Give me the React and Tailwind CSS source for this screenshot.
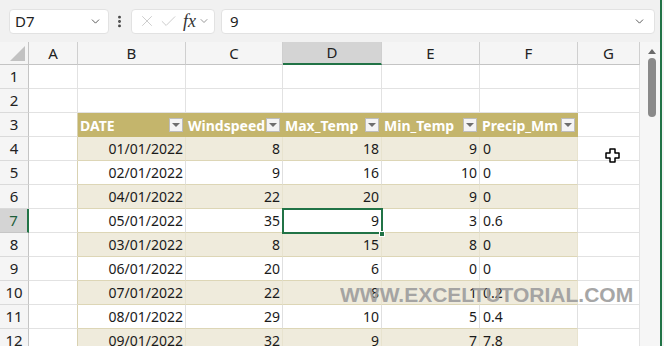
import React from 'react';
import { ChevronDown, X, Check, EllipsisVertical } from 'lucide-react';

const COLS = [
  { key: 'A', w: 'w-[49px]' },
  { key: 'B', w: 'w-[108px]' },
  { key: 'C', w: 'w-[97px]' },
  { key: 'D', w: 'w-[99px]' },
  { key: 'E', w: 'w-[98px]' },
  { key: 'F', w: 'w-[98px]' },
  { key: 'G', w: 'w-[62px]' },
];

const headers = ['DATE', 'Windspeed', 'Max_Temp', 'Min_Temp', 'Precip_Mm'];

const data = [
  ['01/01/2022', 8, 18, 9, '0'],
  ['02/01/2022', 9, 16, 10, '0'],
  ['04/01/2022', 22, 20, 9, '0'],
  ['05/01/2022', 35, 9, 3, '0.6'],
  ['03/01/2022', 8, 15, 8, '0'],
  ['06/01/2022', 20, 6, 0, '0'],
  ['07/01/2022', 22, 8, 1, '0.2'],
  ['08/01/2022', 29, 10, 5, '0.4'],
  ['09/01/2022', 32, 9, 7, '7.8'],
];

const FilterBtn = () => (
  <span className="ml-auto mr-[3px] flex h-[14px] w-[14px] shrink-0 items-center justify-center border border-[#bdbdbd] bg-[#f4f4f4]">
    <span className="h-0 w-0 border-x-[4px] border-t-[4px] border-x-transparent border-t-[#6e6e6e]" />
  </span>
);

const RowHead = ({ n, active }) => (
  <div
    className={`flex h-[24px] w-[29px] shrink-0 items-center justify-center border-b text-[15px] ${
      active
        ? 'border-b-[#c6c6c6] border-r-2 border-r-[#217346] bg-[#d4d4d4] text-[#1d5e3a]'
        : 'border-b-[#dadada] border-r border-r-[#c4c4c4] bg-[#f5f5f5] text-[#222]'
    }`}
  >
    {n}
  </div>
);

const EmptyCell = ({ w, edge }) => (
  <div className={`h-[24px] ${w} shrink-0 border-b border-r border-b-[#e2e2e2] ${edge ? 'border-r-[#d9d2b2]' : 'border-r-[#e2e2e2]'}`} />
);

export default function App() {
  return (
    <div className="flex h-[346px] w-[664px] overflow-hidden bg-white font-['Noto_Sans',sans-serif] text-[#1a1a1a]">
      <div className="flex w-[660px] shrink-0 flex-col">
        {/* formula bar */}
        <div className="flex h-[42px] shrink-0 items-center bg-[#f1f1f1] pl-[9px]">
          <div className="flex h-[25px] w-[100px] items-center justify-between rounded-[4px] border border-[#e2e2e2] bg-white pl-[5px] pr-[6px]">
            <span className="text-[15px] text-[#222]">D7</span>
            <ChevronDown size={13} strokeWidth={1.6} className="text-[#444]" />
          </div>
          <EllipsisVertical size={15} strokeWidth={2.6} className="ml-[3px] text-[#444]" />
          <div className="ml-[4px] flex h-[25px] w-[84px] items-center rounded-[4px] border border-[#e2e2e2] bg-white pl-[6px]">
            <X size={18} strokeWidth={1.1} className="text-[#c4c4c4]" />
            <Check size={19} strokeWidth={1.1} className="ml-[3px] text-[#c4c4c4]" />
            <span className="ml-[5px] font-['Liberation_Serif',serif] text-[18px] italic leading-none text-[#333]">fx</span>
            <ChevronDown size={12} strokeWidth={1.5} className="ml-[2px] text-[#777]" />
          </div>
          <div className="ml-[6px] flex h-[25px] w-[434px] items-center justify-between rounded-[4px] border border-[#e2e2e2] bg-white pl-[8px] pr-[8px]">
            <span className="text-[15px] text-[#222]">9</span>
            <ChevronDown size={13} strokeWidth={1.6} className="text-[#444]" />
          </div>
        </div>

        {/* sheet */}
        <div className="relative flex flex-1">
          <div className="flex w-[640px] shrink-0 flex-col">
            {/* column headers */}
            <div className="flex h-[23px] shrink-0">
              <div className="relative h-[23px] w-[29px] shrink-0 border-b border-r border-[#c4c4c4] bg-[#f5f5f5]">
                <span className="absolute bottom-[3px] right-[3px] h-0 w-0 border-b-[15px] border-l-[15px] border-b-[#c2c2c2] border-l-transparent" />
              </div>
              {COLS.map((c) => (
                <div
                  key={c.key}
                  className={`flex h-[23px] ${c.w} shrink-0 items-center justify-center border-r border-r-[#cfcfcf] text-[15px] ${
                    c.key === 'D'
                      ? 'border-b-2 border-b-[#217346] bg-[#d4d4d4] text-[#222]'
                      : 'border-b border-b-[#c4c4c4] bg-[#f5f5f5] text-[#222]'
                  }`}
                >
                  {c.key}
                </div>
              ))}
            </div>

            {/* rows 1-2 */}
            {[1, 2].map((n) => (
              <div key={n} className="flex">
                <RowHead n={n} />
                {COLS.map((c) => (
                  <EmptyCell key={c.key} w={c.w} />
                ))}
              </div>
            ))}

            {/* row 3: table header */}
            <div className="flex">
              <RowHead n={3} />
              <EmptyCell w="w-[49px]" edge />
              {headers.map((h, i) => (
                <div
                  key={h}
                  className={`flex h-[24px] ${COLS[i + 1].w} shrink-0 items-center bg-[#c4b56c] pl-[2px] text-[14px] font-bold text-white`}
                >
                  <span className="whitespace-nowrap">{h}</span>
                  <FilterBtn />
                </div>
              ))}
              <EmptyCell w="w-[62px]" />
            </div>

            {/* data rows */}
            {data.map((r, i) => {
              const band = i % 2 === 0;
              const rowNo = i + 4;
              const cellCls = band
                ? 'bg-[#efebdc] border-b-[#ddd6b6] border-r-[#e8e3cf]'
                : 'bg-white border-b-[#ddd6b6] border-r-[#e0e0e0]';
              return (
                <div key={rowNo} className="flex">
                  <RowHead n={rowNo} active={rowNo === 7} />
                  <EmptyCell w="w-[49px]" edge />
                  {r.map((v, j) => (
                    <div
                      key={j}
                      className={`flex h-[24px] ${COLS[j + 1].w} shrink-0 items-center border-b border-r text-[14px] ${cellCls} ${
                        j === 4 ? 'justify-start pl-[3px] border-r-[#d9d2b2]' : 'justify-end pr-[2px]'
                      }`}
                    >
                      {v}
                    </div>
                  ))}
                  <EmptyCell w="w-[62px]" />
                </div>
              );
            })}
          </div>

          {/* vertical scrollbar */}
          <div className="relative w-[20px] shrink-0 bg-[#f6f6f6]">
            <span className="absolute left-[8px] top-[7px] h-0 w-0 border-x-[4px] border-b-[5px] border-x-transparent border-b-[#6a6a6a]" />
            <div className="absolute left-[8px] top-[16px] h-[59px] w-[8px] rounded-full bg-[#8a8a8a]" />
          </div>

          {/* active cell D7 */}
          <div className="absolute left-[282px] top-[166px] h-[26px] w-[101px] border-2 border-[#217346]" />
          <div className="absolute left-[379px] top-[189px] h-[6px] w-[6px] border border-white bg-[#217346]" />

          {/* cursor */}
          <svg className="absolute left-[605px] top-[106px]" width="15" height="15" viewBox="0 0 15 15">
            <path
              d="M5 1h5v4h4v5h-4v4h-5v-4h-4v-5h4z"
              fill="#fff"
              stroke="#000"
              strokeWidth="1.5"
              strokeLinejoin="round"
            />
          </svg>

          {/* watermark */}
          <div className="pointer-events-none absolute left-[340px] top-[242px] font-['Liberation_Sans',Arial,sans-serif] text-[21px] font-bold leading-none text-[#9d9d9d] opacity-90">
            WWW.EXCELTUTORIAL.COM
          </div>
        </div>
      </div>
      <div className="w-[2px] shrink-0 bg-[#217346]" />
      <div className="w-[2px] shrink-0 bg-[#f3f3f3]" />
    </div>
  );
}
